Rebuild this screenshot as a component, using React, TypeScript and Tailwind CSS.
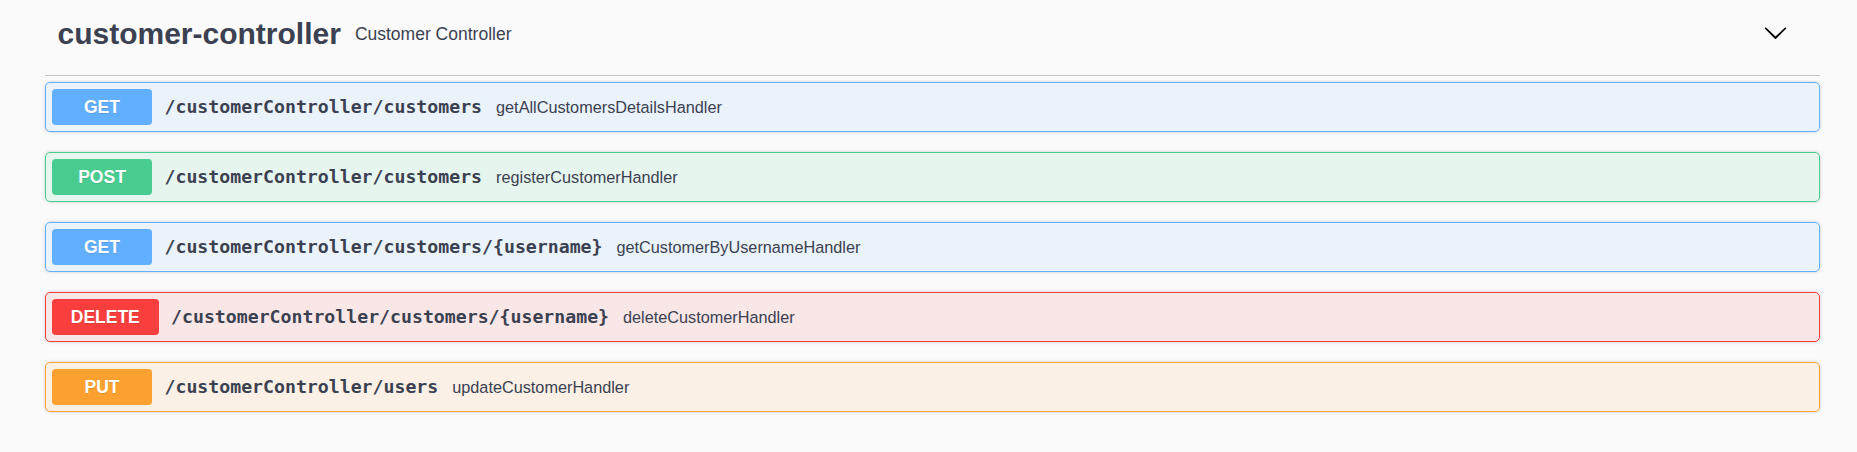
import React from "react";

type Op = {
  method: string;
  path: string;
  desc: string;
  badge: string;
  block: string;
};

const ops: Op[] = [
  {
    method: "GET",
    path: "/customerController/customers",
    desc: "getAllCustomersDetailsHandler",
    badge: "bg-[#61affe]",
    block: "border-[#61affe] bg-[#61affe1a]",
  },
  {
    method: "POST",
    path: "/customerController/customers",
    desc: "registerCustomerHandler",
    badge: "bg-[#49cc90]",
    block: "border-[#49cc90] bg-[#49cc901a]",
  },
  {
    method: "GET",
    path: "/customerController/customers/{username}",
    desc: "getCustomerByUsernameHandler",
    badge: "bg-[#61affe]",
    block: "border-[#61affe] bg-[#61affe1a]",
  },
  {
    method: "DELETE",
    path: "/customerController/customers/{username}",
    desc: "deleteCustomerHandler",
    badge: "bg-[#f93e3e]",
    block: "border-[#f93e3e] bg-[#f93e3e1a]",
  },
  {
    method: "PUT",
    path: "/customerController/users",
    desc: "updateCustomerHandler",
    badge: "bg-[#fca130]",
    block: "border-[#fca130] bg-[#fca1301a]",
  },
];

function Chevron() {
  return (
    <svg width="25" height="25" viewBox="0 0 20 20" aria-hidden="true">
      <path
        fill="#000"
        d="M17.418 6.109c.272-.268.709-.268.979 0s.271.701 0 .969l-7.908 7.83c-.27.268-.707.268-.979 0l-7.908-7.83c-.27-.268-.27-.701 0-.969.271-.268.709-.268.979 0L10 13.25l7.418-7.141z"
      />
    </svg>
  );
}

export default function App() {
  return (
    <div
      className="min-h-screen w-full bg-[#fafafa] text-[#3b4151]"
      style={{ fontFamily: "Arial, 'Liberation Sans', sans-serif" }}
    >
      <div className="pl-[45px] pr-[37px]">
        <div className="flex h-[76px] items-center border-b border-[#3b41514d] pb-[7px] pl-[12.5px] pr-[32px] font-['Liberation_Sans',Arial,sans-serif]">
          <span className="text-[30px] font-bold leading-[1.149]">customer-controller</span>
          <span className="flex-1 pl-[14px] text-[17.5px] leading-[1.149]">Customer Controller</span>
          <span className="mb-[4px] flex">
            <Chevron />
          </span>
        </div>

        <div className="mt-[6px] flex flex-col gap-[20px]">
          {ops.map((op, i) => (
            <div
              key={i}
              className={`flex h-[50px] items-center rounded-[5px] border p-[6px] shadow-[0_0_3.75px_rgba(0,0,0,0.19)] ${op.block}`}
            >
              <div
                className={`flex h-[36px] min-w-[100px] items-center justify-center rounded-[3.75px] px-[18.75px] font-['Liberation_Sans',Arial,sans-serif] text-[17.5px] font-bold leading-[1.149] text-white [text-shadow:0_1.25px_0_rgba(0,0,0,0.1)] ${op.badge}`}
              >
                {op.method}
              </div>
              <span className="px-[12.5px] font-['DejaVu_Sans_Mono',monospace] text-[18.2px] font-bold leading-[1.2] text-[#3b4151]">
                {op.path}
              </span>
              <span className="ml-[1.5px] flex-1 font-['Liberation_Sans',Arial,sans-serif] text-[16.25px] leading-[1.149] text-[#3b4151]">
                {op.desc}
              </span>
            </div>
          ))}
        </div>
      </div>
    </div>
  );
}
